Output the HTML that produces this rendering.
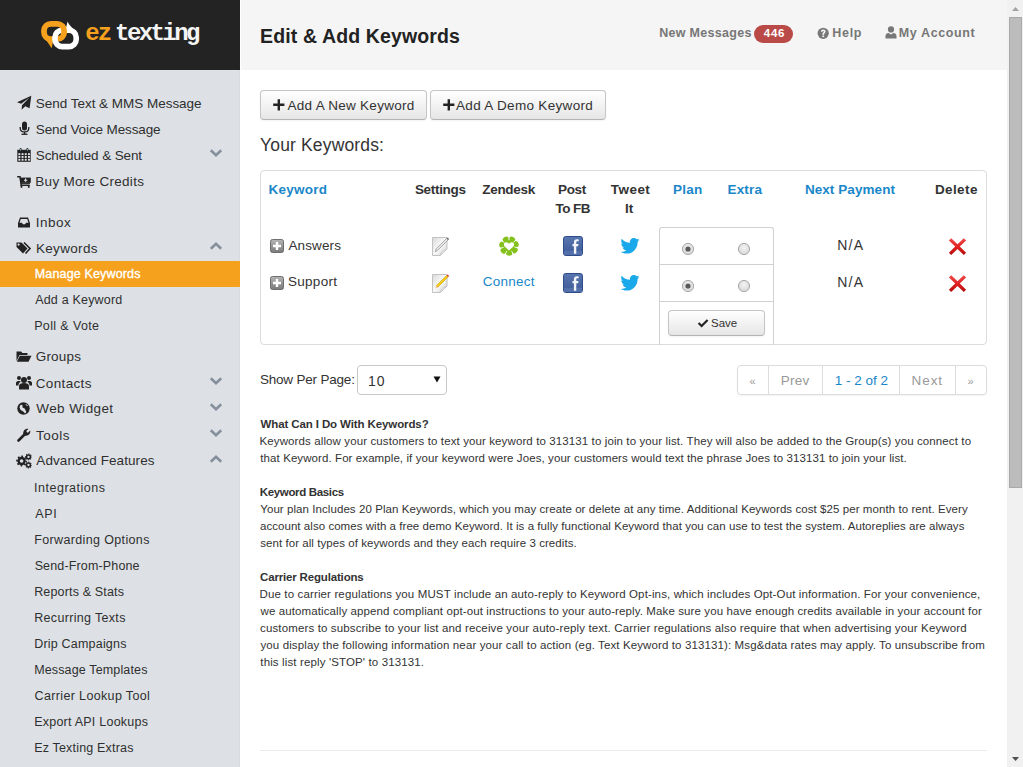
<!DOCTYPE html>
<html><head><meta charset="utf-8"><style>html,body{margin:0;padding:0;width:1023px;height:767px;overflow:hidden;background:#fff;font-family:"Liberation Sans",sans-serif;}
.t{position:absolute;white-space:nowrap;line-height:normal;font-family:"Liberation Sans",sans-serif;}
.a{position:absolute;}
.btn{position:absolute;box-sizing:border-box;border:1px solid #c5c5c5;border-bottom-color:#b3b3b3;border-radius:4px;background:linear-gradient(#ffffff,#e6e6e6);box-shadow:inset 0 1px 0 rgba(255,255,255,.2),0 1px 2px rgba(0,0,0,.05);}
.ico{position:absolute;}
</style></head>
<body>
<!-- sidebar -->
<div class="a" style="left:0;top:0;width:240px;height:767px;background:#dde1e5"></div>
<div class="a" style="left:239px;top:70px;width:1px;height:697px;background:#d7dbdf"></div>
<div class="a" style="left:0;top:0;width:240px;height:70px;background:#232323"></div>
<div class="a" style="left:0;top:261px;width:240px;height:26px;background:#f6a11e"></div>
<!-- header -->
<div class="a" style="left:241px;top:0;width:766px;height:70px;background:#f5f5f5"></div>
<!-- logo -->
<svg class="ico" style="left:38px;top:18px" width="44" height="34" viewBox="0 0 44 34">
  <defs><clipPath id="lc"><rect x="21.5" y="6" width="9" height="10"/></clipPath></defs>
  <rect x="6" y="5.8" width="20.1" height="15.4" rx="7" ry="7" fill="none" stroke="#f6a11e" stroke-width="5.8"/>
  <path d="M4 16 L13.7 30.2 L15.5 20.5 Z" fill="#f6a11e"/>
  <path d="M27.5 12 L29.6 3.6 C31 7 33.5 9.5 37 12.5 Z" fill="#fff"/>
  <rect x="17" y="12.2" width="21.2" height="16.4" rx="7.2" ry="7.2" fill="none" stroke="#fff" stroke-width="5.6"/>
  <rect x="6" y="5.8" width="20.1" height="15.4" rx="7" ry="7" fill="none" stroke="#f6a11e" stroke-width="5.8" clip-path="url(#lc)"/>
</svg>
<!-- scrollbar -->
<div class="a" style="left:1007px;top:0;width:16px;height:767px;background:#f1f1f1"></div>
<div class="a" style="left:1009px;top:17px;width:13px;height:471px;background:#bcbcbc;box-sizing:border-box;border:1px solid #a9a9a9"></div>
<svg class="ico" style="left:1011px;top:6px" width="9" height="6"><path d="M1 5 L4.5 1 L8 5 Z" fill="#a3a3a3"/></svg>
<svg class="ico" style="left:1011px;top:756px" width="9" height="6"><path d="M1 1 L4.5 5 L8 1 Z" fill="#505050"/></svg>
<!-- buttons -->
<div class="btn" style="left:260px;top:90px;width:167px;height:30px"></div>
<div class="btn" style="left:430px;top:90px;width:176px;height:30px"></div>
<svg class="ico" style="left:272.8px;top:99px" width="12" height="12"><path d="M4.6 0.2h2.4v4.4h4.4v2.4h-4.4v4.4h-2.4v-4.4h-4.4v-2.4h4.4z" fill="#222"/></svg>
<svg class="ico" style="left:442.5px;top:99px" width="12" height="12"><path d="M4.6 0.2h2.4v4.4h4.4v2.4h-4.4v4.4h-2.4v-4.4h-4.4v-2.4h4.4z" fill="#222"/></svg>
<!-- table box -->
<div class="a" style="left:260px;top:170px;width:727px;height:175px;box-sizing:border-box;border:1px solid #dcdcdc;border-radius:4px"></div>
<!-- radio box -->
<div class="a" style="left:659px;top:227px;width:115px;height:118px;box-sizing:border-box;border:1px solid #d0d0d0;border-bottom:none;border-radius:3px 3px 0 0"></div>
<div class="a" style="left:660px;top:264px;width:113px;height:1px;background:#d0d0d0"></div>
<div class="a" style="left:660px;top:301px;width:113px;height:1px;background:#d0d0d0"></div>
<!-- select -->
<div class="a" style="left:357px;top:365px;width:90px;height:30px;box-sizing:border-box;border:1px solid #c8c8c8;border-radius:4px;background:#fff"></div>
<svg class="ico" style="left:433px;top:376px" width="8" height="7"><path d="M0.5 0.5 L7.5 0.5 L4 6.5 Z" fill="#111"/></svg>
<!-- pagination -->
<div class="a" style="left:737px;top:365px;width:250px;height:30px;box-sizing:border-box;border:1px solid #dcdcdc;border-radius:4px;box-shadow:0 1px 2px rgba(0,0,0,.05)"></div>
<div class="a" style="left:768px;top:366px;width:1px;height:28px;background:#dcdcdc"></div>
<div class="a" style="left:822px;top:366px;width:1px;height:28px;background:#dcdcdc"></div>
<div class="a" style="left:899px;top:366px;width:1px;height:28px;background:#dcdcdc"></div>
<div class="a" style="left:955px;top:366px;width:1px;height:28px;background:#dcdcdc"></div>
<!-- hr -->
<div class="a" style="left:260px;top:750px;width:727px;height:1px;background:#eaeaea"></div>
<!-- sidebar icons -->
<svg class="ico" style="left:17px;top:95px" width="15" height="15" viewBox="0 0 15 15"><path d="M14.3 0.8 L0 7.2 L4.2 8.8 L12.5 2.6 L5 10.2 L4.6 14.8 L8.3 11.2 L12.6 13.3 Z" fill="#222"/></svg>
<svg class="ico" style="left:18.5px;top:121px" width="11" height="14" viewBox="0 0 11 14"><rect x="3" y="0.5" width="5" height="9" rx="2.5" fill="#222"/><path d="M1.2 6 V7 C1.2 9.5 3 11 5.5 11 C8 11 9.8 9.5 9.8 7 V6" fill="none" stroke="#222" stroke-width="1.3"/><rect x="4.9" y="11" width="1.3" height="2" fill="#222"/><rect x="2.5" y="12.6" width="6" height="1.3" fill="#222"/></svg>
<svg class="ico" style="left:17px;top:148px" width="14" height="14" viewBox="0 0 14 14"><rect x="0.3" y="1.8" width="13.4" height="12" fill="#222"/><g fill="#e4e8ec"><rect x="1.4" y="5.2" width="1.9" height="1.9"/><rect x="4.6" y="5.2" width="1.9" height="1.9"/><rect x="7.8" y="5.2" width="1.9" height="1.9"/><rect x="11.0" y="5.2" width="1.9" height="1.9"/><rect x="1.4" y="8.0" width="1.9" height="1.9"/><rect x="4.6" y="8.0" width="1.9" height="1.9"/><rect x="7.8" y="8.0" width="1.9" height="1.9"/><rect x="11.0" y="8.0" width="1.9" height="1.9"/><rect x="1.4" y="10.8" width="1.9" height="1.9"/><rect x="4.6" y="10.8" width="1.9" height="1.9"/><rect x="7.8" y="10.8" width="1.9" height="1.9"/><rect x="11.0" y="10.8" width="1.9" height="1.9"/></g><rect x="2.6" y="0" width="2" height="3.6" rx="1" fill="#222"/><rect x="9.4" y="0" width="2" height="3.6" rx="1" fill="#222"/><rect x="3.2" y="0.8" width="0.8" height="2" fill="#8fb8d8"/><rect x="10" y="0.8" width="0.8" height="2" fill="#8fb8d8"/></svg>
<svg class="ico" style="left:17px;top:176px" width="14" height="12" viewBox="0 0 14 12"><path d="M0.2 0.8 H3 L4.2 9.2 H12.6" fill="none" stroke="#222" stroke-width="1.5"/><rect x="3.6" y="1.6" width="10.2" height="5.2" fill="#222"/><rect x="4" y="6.6" width="9" height="1.3" fill="#222"/><rect x="3.6" y="9" width="1.7" height="2.8" fill="#222"/><rect x="10.9" y="9" width="1.7" height="2.8" fill="#222"/><path d="M8.6 2.6 v3.2 M7 4.2 h3.2" stroke="#dfe6ee" stroke-width="1.1"/></svg>
<svg class="ico" style="left:18px;top:216.5px" width="12" height="11" viewBox="0 0 12 11"><path d="M2 0.5 H10 L12 6 V10.5 H0 V6 Z" fill="#222"/><path d="M2.8 2 H9.2 L10.5 5.8 H8 L7.2 7.2 H4.8 L4 5.8 H1.5 Z" fill="#dde1e5"/></svg>
<svg class="ico" style="left:16px;top:242px" width="16" height="12" viewBox="0 0 16 12"><path d="M0.5 0.5 H5.5 L11.5 6.5 L7 11.5 L0.5 5 Z" fill="#222"/><circle cx="2.6" cy="2.6" r="1.1" fill="#dde1e5"/><path d="M8 0.5 L14 6.5 L9.5 11.5" fill="none" stroke="#222" stroke-width="1.6"/></svg>
<svg class="ico" style="left:16px;top:351px" width="16" height="11" viewBox="0 0 16 11"><path d="M0.5 0.5 H5 L6.5 2 H11.5 V4 H3.5 L0.5 10 Z" fill="#222"/><path d="M3.8 4.8 H15.5 L12.5 10.8 H0.8 Z" fill="#222"/></svg>
<svg class="ico" style="left:16px;top:375px" width="16" height="15" viewBox="0 0 16 15"><circle cx="8" cy="5" r="3" fill="#222"/><path d="M3 14.5 V11 C3 9 5 8 8 8 C11 8 13 9 13 11 V14.5 Z" fill="#222"/><circle cx="3" cy="3" r="2" fill="#222"/><circle cx="13" cy="3" r="2" fill="#222"/><path d="M0 10.5 V8 C0 6.5 1.5 6 3 6 C4 6 4.5 6.3 5 6.6 C3.5 7.5 2.5 8.5 2.5 10.5 Z" fill="#222"/><path d="M16 10.5 V8 C16 6.5 14.5 6 13 6 C12 6 11.5 6.3 11 6.6 C12.5 7.5 13.5 8.5 13.5 10.5 Z" fill="#222"/></svg>
<svg class="ico" style="left:17px;top:402px" width="13" height="13" viewBox="0 0 13 13"><circle cx="6.5" cy="6.5" r="6.2" fill="#222"/><path d="M3.5 3 C5 2.5 6 3.5 5.5 4.5 C5 5.5 6.5 6 7.5 6.5 C8.5 7 8 8.5 9 9 C9.5 9.5 9 11 8 11.5 C7 10 6 9 4.5 8.5 C3 8 3 6 2.5 5 Z M8.5 2 C9.5 2.3 10.5 3 11 4 C10 4 9 3.5 8.5 2 Z" fill="#dde1e5"/></svg>
<svg class="ico" style="left:17px;top:428px" width="14" height="14" viewBox="0 0 14 14"><path d="M1.5 12.5 L7.5 6.5" stroke="#222" stroke-width="2.6" stroke-linecap="round"/><path d="M6.8 7.2 C5.5 5 6.5 2 9 1 C10 0.6 11 0.7 11.5 0.8 L9.3 3 L9.8 4.2 L11 4.7 L13.2 2.5 C13.4 3.2 13.4 4.2 13 5 C12 7.5 9 8.5 6.8 7.2 Z" fill="#222"/></svg>
<svg class="ico" style="left:14px;top:450px" width="20" height="20" viewBox="0 0 20 20"><circle cx="7.6" cy="11" r="3.0" fill="none" stroke="#222" stroke-width="2.4"/><circle cx="7.6" cy="11" r="4.6" fill="none" stroke="#222" stroke-width="1.6" stroke-dasharray="1.806 1.806" stroke-dashoffset="0.903"/><circle cx="14.5" cy="6.9" r="1.9" fill="none" stroke="#222" stroke-width="1.5"/><circle cx="14.5" cy="6.9" r="2.9" fill="none" stroke="#222" stroke-width="1.1" stroke-dasharray="1.139 1.139" stroke-dashoffset="0.569"/><circle cx="14.5" cy="15" r="1.9" fill="none" stroke="#222" stroke-width="1.5"/><circle cx="14.5" cy="15" r="2.9" fill="none" stroke="#222" stroke-width="1.1" stroke-dasharray="1.139 1.139" stroke-dashoffset="0.569"/></svg>
<!-- chevrons -->
<svg class="ico" style="left:209px;top:148px" width="14" height="10" viewBox="0 0 14 10"><path d="M1.8 2.2 L7 7.2 L12.2 2.2" fill="none" stroke="#85909c" stroke-width="2.6"/></svg>
<svg class="ico" style="left:209px;top:241px" width="14" height="10" viewBox="0 0 14 10"><path d="M1.8 7.8 L7 2.8 L12.2 7.8" fill="none" stroke="#85909c" stroke-width="2.6"/></svg>
<svg class="ico" style="left:209px;top:376px" width="14" height="10" viewBox="0 0 14 10"><path d="M1.8 2.2 L7 7.2 L12.2 2.2" fill="none" stroke="#85909c" stroke-width="2.6"/></svg>
<svg class="ico" style="left:209px;top:402px" width="14" height="10" viewBox="0 0 14 10"><path d="M1.8 2.2 L7 7.2 L12.2 2.2" fill="none" stroke="#85909c" stroke-width="2.6"/></svg>
<svg class="ico" style="left:209px;top:428px" width="14" height="10" viewBox="0 0 14 10"><path d="M1.8 2.2 L7 7.2 L12.2 2.2" fill="none" stroke="#85909c" stroke-width="2.6"/></svg>
<svg class="ico" style="left:209px;top:454px" width="14" height="10" viewBox="0 0 14 10"><path d="M1.8 7.8 L7 2.8 L12.2 7.8" fill="none" stroke="#85909c" stroke-width="2.6"/></svg>
<!-- header icons -->
<div class="a" style="left:754px;top:25px;width:39px;height:18px;border-radius:9px;background:#b94a48"></div>
<svg class="ico" style="left:816.5px;top:26.5px" width="13" height="13" viewBox="0 0 13 13"><circle cx="6.2" cy="6.3" r="5.6" fill="#777"/><g transform="translate(-0.3 -0.3)"><path d="M4.2 5 C4.2 3.5 5.2 2.8 6.6 2.8 C8 2.8 8.9 3.6 8.9 4.8 C8.9 6.2 7.4 6.4 7.4 7.6 V8 H5.7 V7.4 C5.7 5.8 7.2 5.7 7.2 4.9 C7.2 4.4 6.9 4.2 6.5 4.2 C6 4.2 5.8 4.6 5.8 5 Z" fill="#f5f5f5"/><rect x="5.7" y="8.8" width="1.7" height="1.6" fill="#f5f5f5"/></g></svg>
<svg class="ico" style="left:885px;top:25.5px" width="12" height="13" viewBox="0 0 12 13"><circle cx="6" cy="3.4" r="3.1" fill="#777"/><path d="M0.5 12.5 V10 C0.5 8 2 7 3.5 7 L6 8.5 L8.5 7 C10 7 11.5 8 11.5 10 V12.5 Z" fill="#777"/></svg>
<!-- table icons -->
<svg class="ico" style="left:270px;top:239px" width="14" height="14" viewBox="0 0 14 14"><defs><linearGradient id="pg" x1="0" y1="0" x2="0" y2="1"><stop offset="0" stop-color="#b5b5b5"/><stop offset="1" stop-color="#7a7a7a"/></linearGradient></defs><rect x="0.5" y="0.5" width="13" height="13" rx="2" fill="url(#pg)" stroke="#6e6e6e"/><path d="M5.8 3 h2.4 v2.8 h2.8 v2.4 h-2.8 v2.8 h-2.4 v-2.8 h-2.8 v-2.4 h2.8z" fill="#fff"/></svg>
<svg class="ico" style="left:270px;top:276px" width="14" height="14" viewBox="0 0 14 14"><rect x="0.5" y="0.5" width="13" height="13" rx="2" fill="url(#pg)" stroke="#6e6e6e"/><path d="M5.8 3 h2.4 v2.8 h2.8 v2.4 h-2.8 v2.8 h-2.4 v-2.8 h-2.8 v-2.4 h2.8z" fill="#fff"/></svg>
<svg class="ico" style="left:432px;top:236px" width="18" height="20" viewBox="0 0 18 20"><defs><linearGradient id="dg" x1="0" y1="0" x2="1" y2="1"><stop offset="0" stop-color="#d8d8d8"/><stop offset=".5" stop-color="#fafafa"/><stop offset="1" stop-color="#cfcfcf"/></linearGradient></defs><path d="M0.5 1.5 H15 V13 L8 19.5 H0.5 Z" fill="url(#dg)" stroke="#c2c2c2"/><path d="M8 19.5 C9 16 11 14 15 13 C13 15.5 11 17 8 19.5Z" fill="#e8e8e8" stroke="#bdbdbd" stroke-width=".6"/><path d="M3.2 15.8 L4.2 12.8 L14.6 2.4 L16.1 3.9 L5.7 14.3 Z" fill="#e6e6e6" stroke="#8f8f8f" stroke-width=".7"/><path d="M14.6 2.4 L15.6 1.4 L17.1 2.9 L16.1 3.9 Z" fill="#6a6a6a"/></svg>
<svg class="ico" style="left:432px;top:273px" width="18" height="20" viewBox="0 0 18 20"><path d="M0.5 1.5 H15 V13 L8 19.5 H0.5 Z" fill="url(#dg)" stroke="#c2c2c2"/><path d="M8 19.5 C9 16 11 14 15 13 C13 15.5 11 17 8 19.5Z" fill="#e8e8e8" stroke="#bdbdbd" stroke-width=".6"/><path d="M4.2 12.8 L14.6 2.4 L16.1 3.9 L5.7 14.3 Z" fill="#f5cd1a" stroke="#c9a000" stroke-width=".6"/><path d="M3.2 15.8 L4.2 12.8 L5.7 14.3 Z" fill="#e9b99a"/><path d="M14.6 2.4 L15.6 1.4 L17.1 2.9 L16.1 3.9 Z" fill="#e23b3b"/></svg>
<svg class="ico" style="left:499px;top:236px" width="20" height="20" viewBox="0 0 20 20"><g fill="#84c11c"><ellipse cx="6.98" cy="3.70" rx="3.3" ry="3.0" transform="rotate(-26 6.98 3.70)"/><ellipse cx="12.92" cy="3.65" rx="3.3" ry="3.0" transform="rotate(25 12.92 3.65)"/><ellipse cx="16.70" cy="8.23" rx="3.3" ry="3.0" transform="rotate(76 16.70 8.23)"/><ellipse cx="15.51" cy="14.05" rx="3.3" ry="3.0" transform="rotate(127 15.51 14.05)"/><ellipse cx="10.24" cy="16.80" rx="3.3" ry="3.0" transform="rotate(178 10.24 16.80)"/><ellipse cx="4.79" cy="14.43" rx="3.3" ry="3.0" transform="rotate(229 4.79 14.43)"/><ellipse cx="3.20" cy="8.70" rx="3.3" ry="3.0" transform="rotate(280 3.20 8.70)"/><circle cx="10" cy="9.9" r="6"/></g><g stroke="#fff" stroke-width="0.9"><line x1="9.97" y1="4.30" x2="9.94" y2="-1.10"/><line x1="14.33" y1="6.35" x2="18.51" y2="2.93"/><line x1="15.48" y1="11.04" x2="20.77" y2="12.13"/><line x1="12.57" y1="14.88" x2="15.05" y2="19.67"/><line x1="7.75" y1="15.03" x2="5.58" y2="19.97"/><line x1="4.60" y1="11.38" x2="-0.61" y2="12.80"/><line x1="5.45" y1="6.63" x2="1.07" y2="3.48"/></g><path d="M10 14.6 L5.6 10.4 C4.3 9 4.9 6.2 7.3 6.2 C8.6 6.2 9.5 7 10 7.9 C10.5 7 11.4 6.2 12.7 6.2 C15.1 6.2 15.7 9 14.4 10.4 Z" fill="#fff"/></svg>
<svg class="ico" style="left:563px;top:236px" width="20" height="20" viewBox="0 0 20 20"><defs><linearGradient id="fbg" x1="0" y1="0" x2="0" y2="1"><stop offset="0" stop-color="#5a76b0"/><stop offset="1" stop-color="#3c5996"/></linearGradient></defs><rect x="0.5" y="0.5" width="19" height="19" rx="2.2" fill="url(#fbg)" stroke="#2f4c8a"/><rect x="1" y="14.8" width="18" height="4.2" fill="#5470aa"/><path d="M9.6 17.8 V10.2 H8.2 V8 H9.6 V6.3 C9.6 4.2 10.6 3.2 12.6 3.2 C13.4 3.2 14 3.3 14.4 3.4 V5.4 C14 5.3 13.6 5.3 13.2 5.3 C12.4 5.3 12 5.6 12 6.4 V8 H14.2 L13.9 10.2 H12 V17.8 Z" fill="#f2f4f8" transform="translate(1.3 0)"/></svg>
<svg class="ico" style="left:563px;top:273px" width="20" height="20" viewBox="0 0 20 20"><rect x="0.5" y="0.5" width="19" height="19" rx="2.2" fill="url(#fbg)" stroke="#2f4c8a"/><rect x="1" y="14.8" width="18" height="4.2" fill="#5470aa"/><path d="M9.6 17.8 V10.2 H8.2 V8 H9.6 V6.3 C9.6 4.2 10.6 3.2 12.6 3.2 C13.4 3.2 14 3.3 14.4 3.4 V5.4 C14 5.3 13.6 5.3 13.2 5.3 C12.4 5.3 12 5.6 12 6.4 V8 H14.2 L13.9 10.2 H12 V17.8 Z" fill="#f2f4f8" transform="translate(1.3 0)"/></svg>
<svg class="ico" style="left:620px;top:238px" width="20" height="16" viewBox="0 0 24 20"><path d="M24 2.4 C23.1 2.8 22.2 3 21.2 3.2 C22.2 2.6 23 1.6 23.3 0.5 C22.4 1 21.4 1.4 20.3 1.6 C19.4 0.6 18.1 0 16.7 0 C14 0 11.8 2.2 11.8 4.9 C11.8 5.3 11.8 5.7 11.9 6 C7.8 5.8 4.2 3.9 1.7 0.9 C1.3 1.6 1 2.5 1 3.4 C1 5.1 1.9 6.6 3.2 7.5 C2.4 7.5 1.6 7.2 1 6.9 V7 C1 9.4 2.7 11.4 4.9 11.8 C4.5 11.9 4.1 12 3.6 12 C3.3 12 3 12 2.7 11.9 C3.3 13.9 5.1 15.3 7.3 15.3 C5.6 16.6 3.5 17.4 1.2 17.4 C0.8 17.4 0.4 17.4 0 17.3 C2.2 18.7 4.8 19.5 7.5 19.5 C16.6 19.5 21.5 12 21.5 5.5 V4.9 C22.5 4.2 23.3 3.3 24 2.4 Z" fill="#19a8ea"/></svg>
<svg class="ico" style="left:620px;top:275px" width="20" height="16" viewBox="0 0 24 20"><path d="M24 2.4 C23.1 2.8 22.2 3 21.2 3.2 C22.2 2.6 23 1.6 23.3 0.5 C22.4 1 21.4 1.4 20.3 1.6 C19.4 0.6 18.1 0 16.7 0 C14 0 11.8 2.2 11.8 4.9 C11.8 5.3 11.8 5.7 11.9 6 C7.8 5.8 4.2 3.9 1.7 0.9 C1.3 1.6 1 2.5 1 3.4 C1 5.1 1.9 6.6 3.2 7.5 C2.4 7.5 1.6 7.2 1 6.9 V7 C1 9.4 2.7 11.4 4.9 11.8 C4.5 11.9 4.1 12 3.6 12 C3.3 12 3 12 2.7 11.9 C3.3 13.9 5.1 15.3 7.3 15.3 C5.6 16.6 3.5 17.4 1.2 17.4 C0.8 17.4 0.4 17.4 0 17.3 C2.2 18.7 4.8 19.5 7.5 19.5 C16.6 19.5 21.5 12 21.5 5.5 V4.9 C22.5 4.2 23.3 3.3 24 2.4 Z" fill="#19a8ea"/></svg>
<!-- radios -->
<svg class="ico" style="left:681px;top:242px" width="14" height="14" viewBox="0 0 14 14"><defs><radialGradient id="rg" cx=".5" cy=".4" r=".6"><stop offset="0" stop-color="#f4f4f4"/><stop offset="1" stop-color="#d6d6d6"/></radialGradient></defs><circle cx="7" cy="7" r="5.6" fill="url(#rg)" stroke="#a9a9a9"/><circle cx="7" cy="7" r="2.6" fill="#5a5a5a"/></svg>
<svg class="ico" style="left:737px;top:242px" width="14" height="14" viewBox="0 0 14 14"><circle cx="7" cy="7" r="5.6" fill="url(#rg)" stroke="#a9a9a9"/></svg>
<svg class="ico" style="left:681px;top:279px" width="14" height="14" viewBox="0 0 14 14"><circle cx="7" cy="7" r="5.6" fill="url(#rg)" stroke="#a9a9a9"/><circle cx="7" cy="7" r="2.6" fill="#5a5a5a"/></svg>
<svg class="ico" style="left:737px;top:279px" width="14" height="14" viewBox="0 0 14 14"><circle cx="7" cy="7" r="5.6" fill="url(#rg)" stroke="#a9a9a9"/></svg>
<!-- save btn -->
<div class="btn" style="left:668px;top:310px;width:97px;height:26px"></div>
<svg class="ico" style="left:697px;top:318px" width="12" height="10" viewBox="0 0 12 10"><path d="M1.6 5 L4.6 8 L10.6 2" fill="none" stroke="#222" stroke-width="2.2"/></svg>
<!-- delete X -->
<svg class="ico" style="left:948px;top:237px" width="19" height="19" viewBox="0 0 19 19"><defs><linearGradient id="xg" x1="0" y1="0" x2="0" y2="1"><stop offset="0" stop-color="#ee4a4a"/><stop offset=".55" stop-color="#e02020"/><stop offset="1" stop-color="#b00a0a"/></linearGradient></defs><path d="M0.9 3.5 L3.2 1.2 L9.5 7.3 L15.8 1.2 L18.1 3.5 L11.8 9.6 L18.1 15.7 L15.8 18 L9.5 11.9 L3.2 18 L0.9 15.7 L7.2 9.6 Z" fill="url(#xg)"/></svg>
<svg class="ico" style="left:948px;top:274px" width="19" height="19" viewBox="0 0 19 19"><path d="M0.9 3.5 L3.2 1.2 L9.5 7.3 L15.8 1.2 L18.1 3.5 L11.8 9.6 L18.1 15.7 L15.8 18 L9.5 11.9 L3.2 18 L0.9 15.7 L7.2 9.6 Z" fill="url(#xg)"/></svg>

<div class="t" style="left:35.79px;top:95.78px;font-size:13.5px;font-weight:normal;color:#2f2f2f;letter-spacing:-0.023px;">Send Text &amp; MMS Message</div>
<div class="t" style="left:35.79px;top:121.78px;font-size:13.5px;font-weight:normal;color:#2f2f2f;letter-spacing:-0.119px;">Send Voice Message</div>
<div class="t" style="left:35.79px;top:147.78px;font-size:13.5px;font-weight:normal;color:#2f2f2f;letter-spacing:-0.119px;">Scheduled &amp; Sent</div>
<div class="t" style="left:35.29px;top:173.78px;font-size:13.5px;font-weight:normal;color:#2f2f2f;letter-spacing:0.293px;">Buy More Credits</div>
<div class="t" style="left:35.85px;top:215.18px;font-size:13.5px;font-weight:normal;color:#2f2f2f;letter-spacing:0.440px;">Inbox</div>
<div class="t" style="left:35.89px;top:240.78px;font-size:13.5px;font-weight:normal;color:#2f2f2f;letter-spacing:0.331px;">Keywords</div>
<div class="t" style="left:34.77px;top:267.38px;font-size:12.5px;font-weight:normal;color:#fff;-webkit-text-stroke:0.35px #fff;letter-spacing:0.153px;">Manage Keywords</div>
<div class="t" style="left:35.18px;top:293.38px;font-size:12.5px;font-weight:normal;color:#2f2f2f;letter-spacing:0.196px;">Add a Keyword</div>
<div class="t" style="left:34.17px;top:319.38px;font-size:12.5px;font-weight:normal;color:#2f2f2f;letter-spacing:0.372px;">Poll &amp; Vote</div>
<div class="t" style="left:35.72px;top:349.48px;font-size:13.5px;font-weight:normal;color:#2f2f2f;letter-spacing:0.197px;">Groups</div>
<div class="t" style="left:35.71px;top:375.78px;font-size:13.5px;font-weight:normal;color:#2f2f2f;letter-spacing:0.356px;">Contacts</div>
<div class="t" style="left:36.34px;top:401.28px;font-size:13.5px;font-weight:normal;color:#2f2f2f;letter-spacing:0.386px;">Web Widget</div>
<div class="t" style="left:36.10px;top:427.58px;font-size:13.5px;font-weight:normal;color:#2f2f2f;letter-spacing:0.469px;">Tools</div>
<div class="t" style="left:36.37px;top:453.48px;font-size:13.5px;font-weight:normal;color:#2f2f2f;letter-spacing:0.065px;">Advanced Features</div>
<div class="t" style="left:34.05px;top:480.68px;font-size:12.5px;font-weight:normal;color:#2f2f2f;letter-spacing:0.507px;">Integrations</div>
<div class="t" style="left:35.18px;top:506.68px;font-size:12.5px;font-weight:normal;color:#2f2f2f;letter-spacing:0.661px;">API</div>
<div class="t" style="left:34.17px;top:532.68px;font-size:12.5px;font-weight:normal;color:#2f2f2f;letter-spacing:0.365px;">Forwarding Options</div>
<div class="t" style="left:34.63px;top:558.68px;font-size:12.5px;font-weight:normal;color:#2f2f2f;letter-spacing:0.150px;">Send-From-Phone</div>
<div class="t" style="left:34.17px;top:584.68px;font-size:12.5px;font-weight:normal;color:#2f2f2f;letter-spacing:0.159px;">Reports &amp; Stats</div>
<div class="t" style="left:34.17px;top:610.68px;font-size:12.5px;font-weight:normal;color:#2f2f2f;letter-spacing:0.333px;">Recurring Texts</div>
<div class="t" style="left:34.17px;top:636.68px;font-size:12.5px;font-weight:normal;color:#2f2f2f;letter-spacing:0.204px;">Drip Campaigns</div>
<div class="t" style="left:34.17px;top:662.68px;font-size:12.5px;font-weight:normal;color:#2f2f2f;letter-spacing:0.146px;">Message Templates</div>
<div class="t" style="left:34.57px;top:688.68px;font-size:12.5px;font-weight:normal;color:#2f2f2f;letter-spacing:0.356px;">Carrier Lookup Tool</div>
<div class="t" style="left:34.17px;top:714.68px;font-size:12.5px;font-weight:normal;color:#2f2f2f;letter-spacing:0.234px;">Export API Lookups</div>
<div class="t" style="left:34.17px;top:740.68px;font-size:12.5px;font-weight:normal;color:#2f2f2f;letter-spacing:0.183px;">Ez Texting Extras</div>
<div class="t" style="left:260.10px;top:25.05px;font-size:19.5px;font-weight:bold;color:#222;letter-spacing:0.120px;">Edit &amp; Add Keywords</div>
<div class="t" style="left:659.16px;top:26.48px;font-size:12.5px;font-weight:bold;color:#777;letter-spacing:0.310px;">New Messages</div>
<div class="t" style="left:763.83px;top:27.39px;font-size:11.5px;font-weight:bold;color:#fff;letter-spacing:0.701px;">446</div>
<div class="t" style="left:832.16px;top:26.28px;font-size:12.5px;font-weight:bold;color:#777;letter-spacing:0.752px;">Help</div>
<div class="t" style="left:898.86px;top:26.28px;font-size:12.5px;font-weight:bold;color:#777;letter-spacing:0.602px;">My Account</div>
<div class="t" style="left:287.57px;top:98.08px;font-size:13.5px;font-weight:normal;color:#333;letter-spacing:0.273px;">Add A New Keyword</div>
<div class="t" style="left:455.97px;top:98.08px;font-size:13.5px;font-weight:normal;color:#333;letter-spacing:0.328px;">Add A Demo Keyword</div>
<div class="t" style="left:260.12px;top:134.66px;font-size:17.5px;font-weight:normal;color:#333;letter-spacing:0.143px;">Your Keywords:</div>
<div class="t" style="left:268.60px;top:181.58px;font-size:13.5px;font-weight:bold;color:#1a87c9;letter-spacing:0.246px;">Keyword</div>
<div class="t" style="left:414.91px;top:181.58px;font-size:13.5px;font-weight:bold;color:#333;letter-spacing:-0.318px;">Settings</div>
<div class="t" style="left:482.30px;top:181.58px;font-size:13.5px;font-weight:bold;color:#333;letter-spacing:-0.315px;">Zendesk</div>
<div class="t" style="left:558.10px;top:181.58px;font-size:13.5px;font-weight:bold;color:#333;letter-spacing:-0.399px;">Post</div>
<div class="t" style="left:555.45px;top:201.18px;font-size:13.5px;font-weight:bold;color:#333;letter-spacing:-0.546px;">To FB</div>
<div class="t" style="left:610.75px;top:181.58px;font-size:13.5px;font-weight:bold;color:#333;letter-spacing:0.463px;">Tweet</div>
<div class="t" style="left:625.10px;top:201.18px;font-size:13.5px;font-weight:bold;color:#333;">It</div>
<div class="t" style="left:673.00px;top:181.58px;font-size:13.5px;font-weight:bold;color:#1a87c9;letter-spacing:0.208px;">Plan</div>
<div class="t" style="left:727.50px;top:181.58px;font-size:13.5px;font-weight:bold;color:#1a87c9;letter-spacing:0.159px;">Extra</div>
<div class="t" style="left:804.90px;top:181.58px;font-size:13.5px;font-weight:bold;color:#1a87c9;letter-spacing:0.070px;">Next Payment</div>
<div class="t" style="left:934.90px;top:181.58px;font-size:13.5px;font-weight:bold;color:#333;letter-spacing:0.407px;">Delete</div>
<div class="t" style="left:288.47px;top:237.68px;font-size:13.5px;font-weight:normal;color:#333;letter-spacing:0.125px;">Answers</div>
<div class="t" style="left:287.89px;top:274.18px;font-size:13.5px;font-weight:normal;color:#333;letter-spacing:0.319px;">Support</div>
<div class="t" style="left:482.81px;top:274.48px;font-size:13.5px;font-weight:normal;color:#1a87c9;letter-spacing:0.248px;">Connect</div>
<div class="t" style="left:837.35px;top:237.13px;font-size:14px;font-weight:normal;color:#333;letter-spacing:1.166px;">N/A</div>
<div class="t" style="left:837.35px;top:273.83px;font-size:14px;font-weight:normal;color:#333;letter-spacing:1.166px;">N/A</div>
<div class="t" style="left:710.98px;top:317.19px;font-size:11.5px;font-weight:normal;color:#333;">Save</div>
<div class="t" style="left:259.89px;top:371.78px;font-size:13.5px;font-weight:normal;color:#333;letter-spacing:-0.194px;">Show Per Page:</div>
<div class="t" style="left:367.93px;top:372.73px;font-size:14px;font-weight:normal;color:#333;letter-spacing:1.035px;">10</div>
<div class="t" style="left:749.55px;top:374.54px;font-size:11px;font-weight:normal;color:#999;">&laquo;</div>
<div class="t" style="left:780.69px;top:372.68px;font-size:13.5px;font-weight:normal;color:#999;letter-spacing:0.263px;">Prev</div>
<div class="t" style="left:834.77px;top:372.68px;font-size:13.5px;font-weight:normal;color:#1a87c9;letter-spacing:-0.010px;">1 - 2 of 2</div>
<div class="t" style="left:911.59px;top:372.68px;font-size:13.5px;font-weight:normal;color:#999;letter-spacing:0.914px;">Next</div>
<div class="t" style="left:967.45px;top:374.54px;font-size:11px;font-weight:normal;color:#999;">&raquo;</div>
<div class="t" style="left:260.49px;top:417.59px;font-size:11.5px;font-weight:bold;color:#333;letter-spacing:-0.109px;">What Can I Do With Keywords?</div>
<div class="t" style="left:259.56px;top:434.59px;font-size:11.5px;font-weight:normal;color:#333;letter-spacing:0.110px;">Keywords allow your customers to text your keyword to 313131 to join to your list. They will also be added to the Group(s) you connect to</div>
<div class="t" style="left:260.33px;top:451.59px;font-size:11.5px;font-weight:normal;color:#333;letter-spacing:0.085px;">that Keyword. For example, if your keyword were Joes, your customers would text the phrase Joes to 313131 to join your list.</div>
<div class="t" style="left:259.73px;top:485.59px;font-size:11.5px;font-weight:bold;color:#333;letter-spacing:-0.340px;">Keyword Basics</div>
<div class="t" style="left:260.25px;top:502.59px;font-size:11.5px;font-weight:normal;color:#333;letter-spacing:0.069px;">Your plan Includes 20 Plan Keywords, which you may create or delete at any time. Additional Keywords cost $25 per month to rent. Every</div>
<div class="t" style="left:260.01px;top:519.59px;font-size:11.5px;font-weight:normal;color:#333;letter-spacing:0.047px;">account also comes with a free demo Keyword. It is a fully functional Keyword that you can use to test the system. Autoreplies are always</div>
<div class="t" style="left:260.18px;top:536.59px;font-size:11.5px;font-weight:normal;color:#333;letter-spacing:0.063px;">sent for all types of keywords and they each require 3 credits.</div>
<div class="t" style="left:260.03px;top:570.59px;font-size:11.5px;font-weight:bold;color:#333;letter-spacing:-0.166px;">Carrier Regulations</div>
<div class="t" style="left:259.56px;top:587.59px;font-size:11.5px;font-weight:normal;color:#333;letter-spacing:0.133px;">Due to carrier regulations you MUST include an auto-reply to Keyword Opt-ins, which includes Opt-Out information. For your convenience,</div>
<div class="t" style="left:260.52px;top:604.59px;font-size:11.5px;font-weight:normal;color:#333;letter-spacing:0.110px;">we automatically append compliant opt-out instructions to your auto-reply. Make sure you have enough credits available in your account for</div>
<div class="t" style="left:260.01px;top:621.59px;font-size:11.5px;font-weight:normal;color:#333;letter-spacing:0.139px;">customers to subscribe to your list and receive your auto-reply text. Carrier regulations also require that when advertising your Keyword</div>
<div class="t" style="left:260.47px;top:638.59px;font-size:11.5px;font-weight:normal;color:#333;letter-spacing:0.117px;">you display the following information near your call to action (eg. Text Keyword to 313131): Msg&amp;data rates may apply. To unsubscribe from</div>
<div class="t" style="left:260.33px;top:655.59px;font-size:11.5px;font-weight:normal;color:#333;letter-spacing:0.132px;">this list reply 'STOP' to 313131.</div>
<div class="t" style="left:85.33px;top:20.41px;font-size:24px;font-weight:bold;color:#f6a11e;font-family:'Liberation Mono',monospace;letter-spacing:-1.859px;">ez</div>
<div class="t" style="left:115.11px;top:20.41px;font-size:24px;font-weight:bold;color:#f4f4f4;font-family:'Liberation Mono',monospace;letter-spacing:-2.599px;">texting</div>
</body></html>
